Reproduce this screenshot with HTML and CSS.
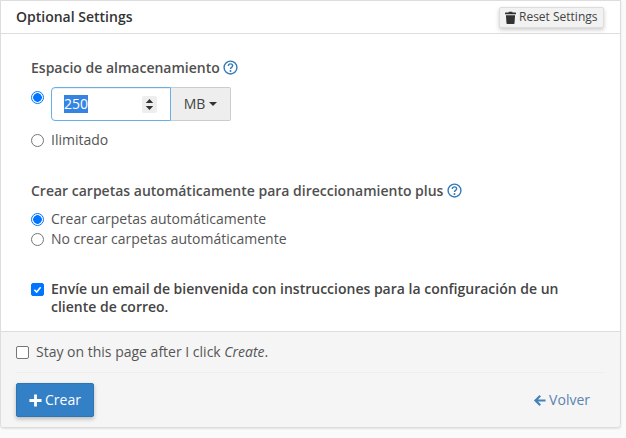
FILE: index.html
```html
<!DOCTYPE html>
<html lang="es">
<head>
<meta charset="utf-8">
<title>Optional Settings</title>
<link rel="stylesheet" href="styles.css">
</head>
<body>
<div class="card">
  <div class="card-header">
    <h2 class="card-title">Optional Settings</h2>
    <button class="reset-btn" type="button">
      <svg class="trash" viewBox="0 0 12 14" aria-hidden="true"><path d="M4.200.6h3.600l.5 1H11.400c.3 0 .6.3.6.6v1c0 .2-.1.3-.3.3H.3C.1 3.500 0 3.400 0 3.200v-1c0-.3.3-.6.6-.6h3.100zM1 4.500h10l-.6 8.400c0 .6-.5 1.100-1.100 1.100H2.700c-.6 0-1.100-.5-1.100-1.100z"/></svg>
      Reset Settings
    </button>
  </div>
  <div class="card-body">
    <div class="group group-quota">
      <div class="label">Espacio de almacenamiento <svg class="help" viewBox="0 0 14 14" aria-hidden="true"><circle cx="7" cy="7" r="6" fill="none" stroke="#337ab7" stroke-width="1.300"/><path d="M5 5.500C5 4.300 5.900 3.600 7 3.600s2 .7 2 1.800c0 1.400-2 1.500-2 3" fill="none" stroke="#337ab7" stroke-width="1.300"/><circle cx="7" cy="10.300" r=".9" fill="#337ab7"/></svg></div>
      <div class="quota-row">
        <span class="radio checked quota-radio"></span>
        <div class="input-group">
          <div class="number"><span class="selected">250</span>
            <span class="spinner"><svg viewBox="0 0 9 14" aria-hidden="true"><path d="M4.500 1 8.500 5.500H.5zM4.500 13 .5 8.500h8z"/></svg></span>
          </div>
          <div class="unit">MB<span class="caret"></span></div>
        </div>
      </div>
      <div class="option option-unlimited"><span class="radio"></span><span>Ilimitado</span></div>
    </div>
    <div class="group group-folders">
      <div class="label">Crear carpetas automáticamente para direccionamiento plus <svg class="help" viewBox="0 0 14 14" aria-hidden="true"><circle cx="7" cy="7" r="6" fill="none" stroke="#337ab7" stroke-width="1.300"/><path d="M5 5.500C5 4.300 5.900 3.600 7 3.600s2 .7 2 1.800c0 1.400-2 1.500-2 3" fill="none" stroke="#337ab7" stroke-width="1.300"/><circle cx="7" cy="10.300" r=".9" fill="#337ab7"/></svg></div>
      <div class="option tight"><span class="radio checked"></span><span>Crear carpetas automáticamente</span></div>
      <div class="option tight"><span class="radio"></span><span>No crear carpetas automáticamente</span></div>
    </div>
    <div class="welcome">
      <span class="check checked"><svg viewBox="0 0 14 14" aria-hidden="true"><path d="M3 7.300 5.900 10.200 11 4.200" fill="none" stroke="#fff" stroke-width="2"/></svg></span>
      <span class="welcome-text">Envíe un email de bienvenida con instrucciones para la configuración de un cliente de correo.</span>
    </div>
  </div>
  <div class="card-footer">
    <div class="stay"><span class="check"></span><span>Stay on this page after I click <em>Create</em>.</span></div>
    <div class="actions">
      <button class="create-btn" type="button"><svg class="plus" viewBox="0 0 14 14" aria-hidden="true"><path d="M5.500.5h3v5H13.500v3H8.500v5h-3v-5H.5v-3h5z"/></svg>Crear</button>
      <a class="back" href="#"><svg class="arrow" viewBox="0 0 14 14" aria-hidden="true"><path d="M7 1 8.600 2.600 5.400 5.800H13.500v2.400H5.400l3.200 3.200L7 13 1 7z"/></svg>Volver</a>
    </div>
  </div>
</div>
</body>
</html>
```
FILE: styles.css
```css
* { box-sizing: border-box; }
html, body { margin: 0; padding: 0; }
body {
  background: #fafafa;
  font-family: "Open Sans", sans-serif;
  font-size: 14px;
  line-height: 20px;
  color: #333;
  height: 438px;
  overflow: hidden;
}
.card {
  width: 621px;
  background: #fff;
  border: 1px solid #ddd;
  border-radius: 0 0 4px 4px;
  box-shadow: 0 1px 2px rgba(0,0,0,.1);
}
.card-header {
  height: 33px;
  padding: 0 16px 0 15px;
  display: flex;
  align-items: center;
  justify-content: space-between;
  border-bottom: 1px solid #ddd;
}
.card-title { margin: 0; font-size: 14px; font-weight: 600; color: #333; }
.reset-btn {
  height: 21px;
  width: 105px;
  padding: 0 5px;
  display: flex;
  align-items: center;
  gap: 3px;
  font: 12px/18px "Open Sans", sans-serif;
  color: #444;
  background: #f2f2f2;
  border: 1px solid #ddd;
  border-radius: 2px;
  box-shadow: 0 2px 4px rgba(0,0,0,.2);
  white-space: nowrap;
}
.trash { width: 11px; height: 13px; fill: #333; flex: none; }
.card-body { height: 298px; padding: 24px 30px 0; border-bottom: 1px solid #ddd; }
.label { color: #505050; height: 20px; font-weight: 600; }
.help { width: 15px; height: 15px; vertical-align: -2px; }
.quota-row { display: flex; gap: 7px; margin-top: 9px; }
.radio {
  flex: none;
  width: 13px;
  height: 13px;
  margin-right: 7px;
  border: 1px solid #767676;
  border-radius: 50%;
  background: #fff;
  display: inline-block;
}
.radio.checked {
  border: 1.500px solid #0075ff;
  background: radial-gradient(circle, #0075ff 0 4px, #fff 4.600px);
}
.quota-radio { margin: 4px 0 0; }
.input-group { display: flex; height: 34px; }
.number {
  width: 120px;
  height: 34px;
  padding: 0 12px;
  display: flex;
  align-items: center;
  justify-content: space-between;
  border: 1px solid #66afe9;
  border-radius: 4px 0 0 4px;
  box-shadow: inset 0 1px 1px rgba(0,0,0,.075);
}
.selected { background: #3584e4; color: #fff; line-height: 18px; padding: 0; }
.spinner {
  width: 15px;
  height: 17px;
  background: #eee;
  border-radius: 2px;
  display: flex;
  align-items: center;
  justify-content: center;
  margin-right: 1px;
}
.spinner svg { width: 9px; height: 13px; fill: #333; }
.unit {
  width: 60px;
  height: 34px;
  display: flex;
  align-items: center;
  justify-content: center;
  gap: 4px;
  background: #eee;
  border: 1px solid #ccc;
  border-left: 0;
  border-radius: 0 2px 2px 0;
  color: #444;
}
.caret { border-top: 4px solid #333; border-left: 4px solid transparent; border-right: 4px solid transparent; }
.option { display: flex; align-items: center; color: #555; }
.option-unlimited { margin-top: 9px; height: 20px; }
.tight { height: 20px; }
.group-folders { margin-top: 31px; }
.group-folders .label { margin-bottom: 8px; }
.welcome { display: flex; margin-top: 31px; font-weight: 600; color: #444; line-height: 18px; }
.check {
  flex: none;
  width: 13px;
  height: 13px;
  margin-right: 7px;
  border: 1px solid #767676;
  border-radius: 2px;
  background: #fff;
  display: inline-block;
}
.check.checked { background: #0075ff; border-color: #0075ff; margin-top: 3px; display: flex; }
.check.checked svg { width: 100%; height: 100%; }
.welcome-text { width: 530px; }
.card-footer { background: #f5f5f5; height: 95px; padding: 10px 15px 0; border-radius: 0 0 4px 4px; }
.stay { display: flex; align-items: center; height: 20px; color: #555; }
.actions {
  margin-top: 10px;
  padding-top: 10px;
  border-top: 1px solid #eee;
  display: flex;
  align-items: center;
  justify-content: space-between;
}
.create-btn {
  width: 78px;
  height: 34px;
  display: flex;
  align-items: center;
  justify-content: center;
  gap: 3px;
  padding: 0;
  background: #3480c6;
  color: #fff;
  border: 1px solid #2e75b5;
  border-radius: 2px;
  font: 14px/20px "Open Sans", sans-serif;
  box-shadow: 0 2px 4px rgba(0,0,0,.25);
}
.plus { width: 13px; height: 13px; fill: #fff; }
.back { display: flex; align-items: center; gap: 3px; color: #5b84b1; text-decoration: none; margin-right: 15px; }
.arrow { width: 13px; height: 13px; fill: #4582b8; margin-left: -2px; }
```
